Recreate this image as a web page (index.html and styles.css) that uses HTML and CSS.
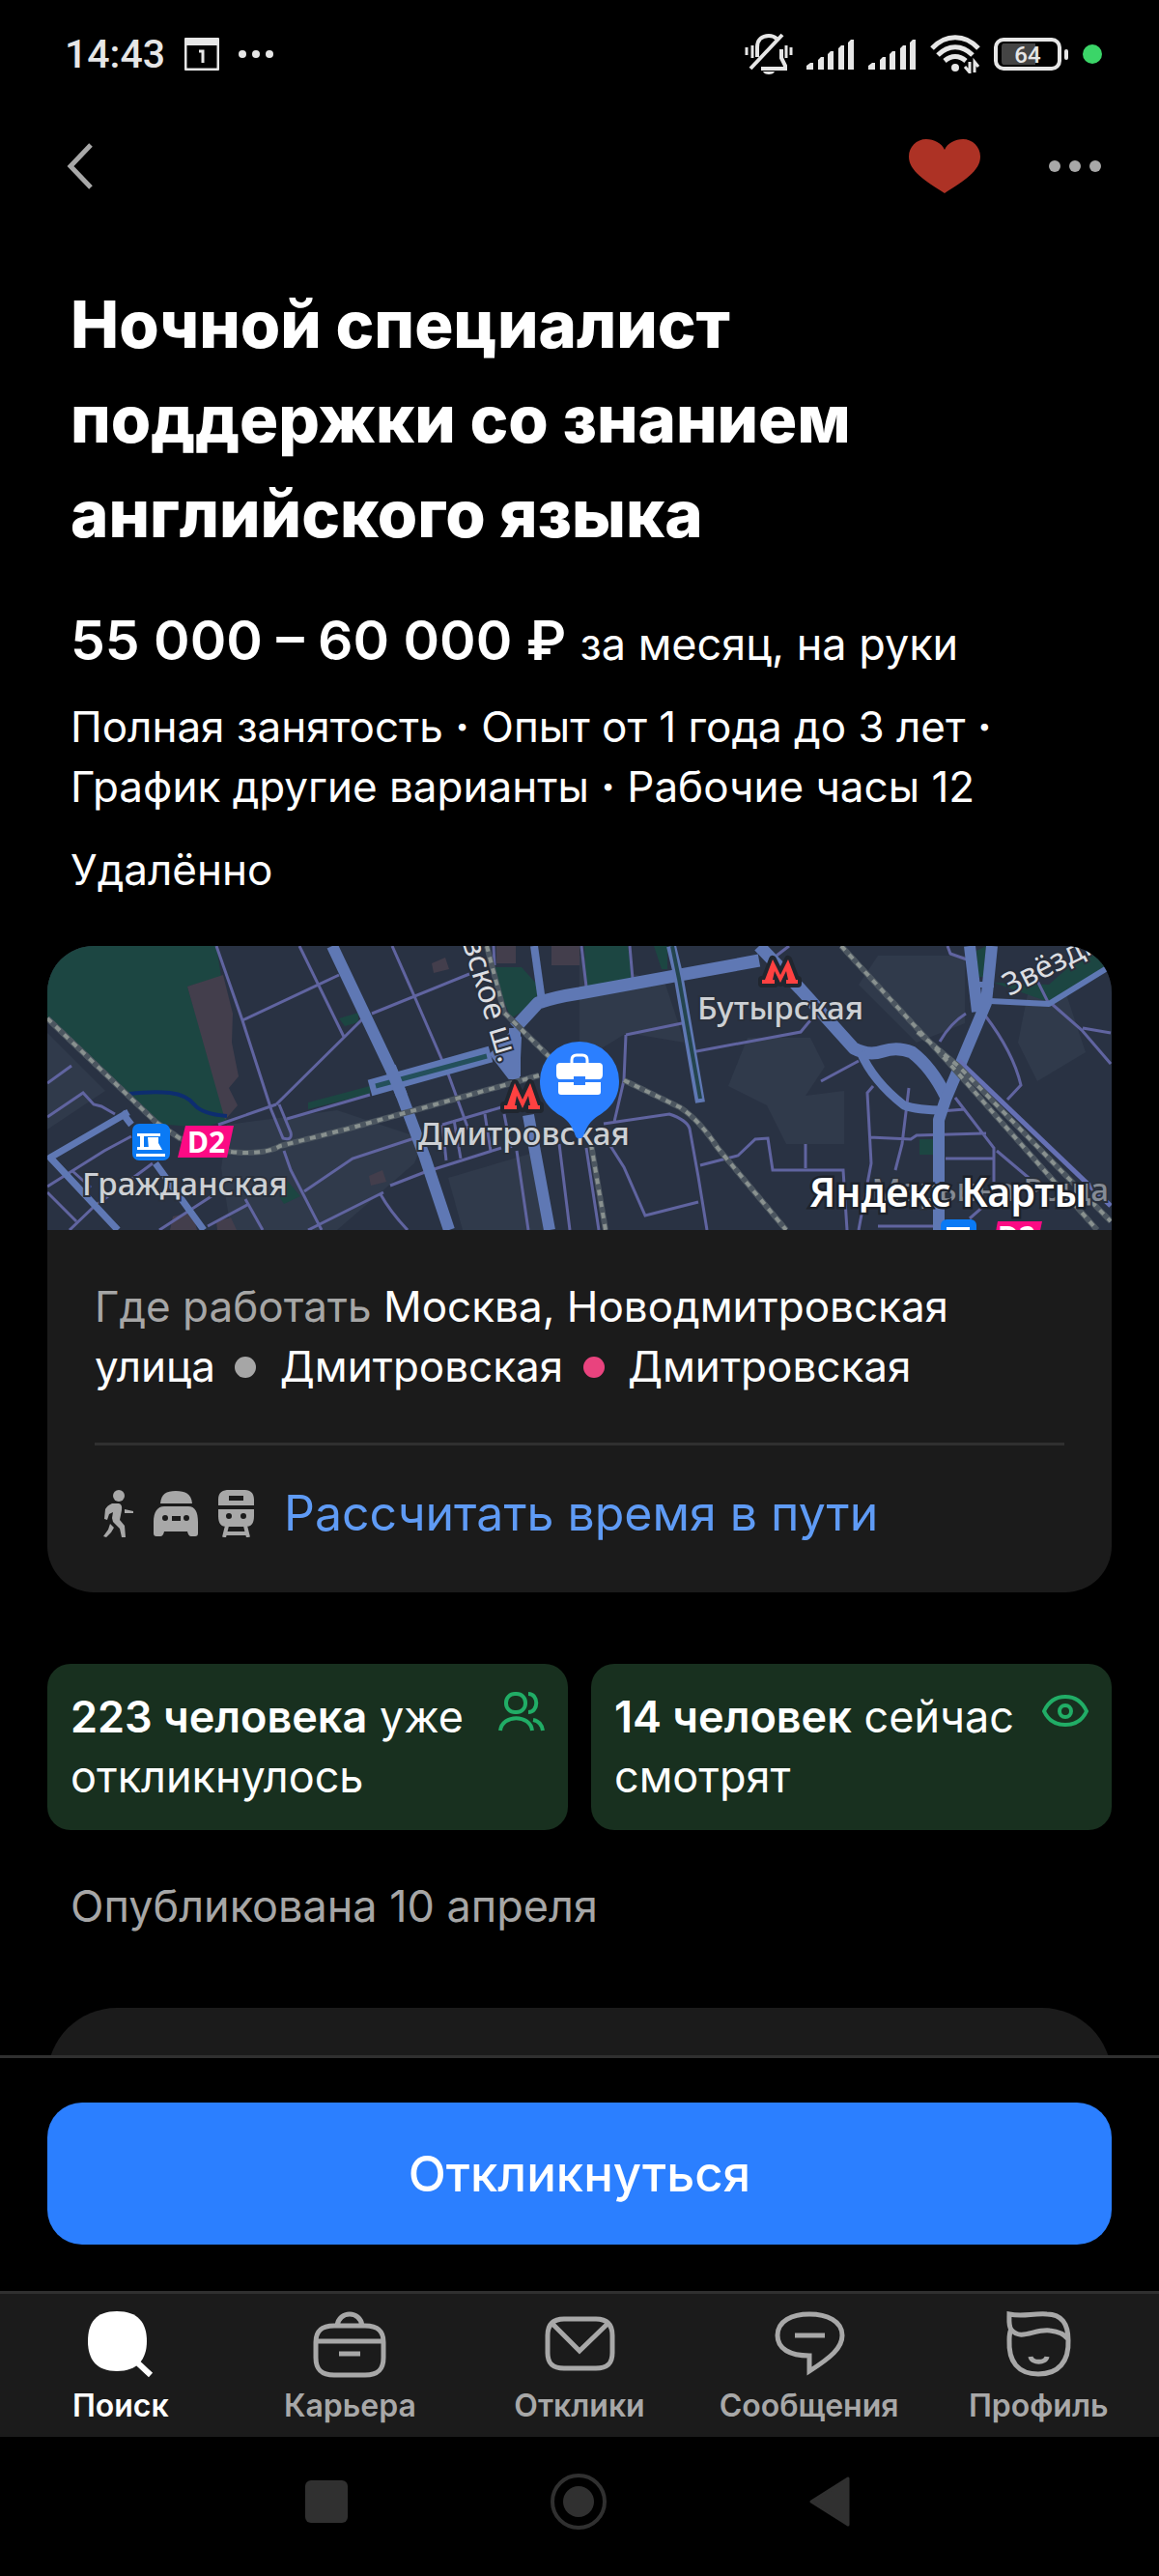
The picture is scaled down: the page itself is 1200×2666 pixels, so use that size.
FILE: index.html
```
<!DOCTYPE html>
<html lang="ru">
  <head>
    <meta charset="UTF-8" />
    <meta name="viewport" content="width=device-width, initial-scale=1.0" />
    <title>Ночной специалист поддержки со знанием английского языка</title>
    <link rel="stylesheet" href="styles.css">
  </head>
  <body>
    <div class="statusBar">
      <div class="statusLeft">
        <span class="time">14:43</span>
        <svg width="36" height="34" viewBox="0 0 36 34">
          <rect x="1" y="1" width="34" height="32" rx="2" fill="none" stroke="#e6e6e6" stroke-width="3" />
          <rect x="1" y="1" width="34" height="7" fill="#e6e6e6" />
          <path d="M15 14h4v12" fill="none" stroke="#e6e6e6" stroke-width="3" />
        </svg>
        <svg width="36" height="8" viewBox="0 0 36 8" fill="#e6e6e6">
          <circle cx="4" cy="4" r="4" />
          <circle cx="18" cy="4" r="4" />
          <circle cx="32" cy="4" r="4" />
        </svg>
      </div>
      <div class="statusRight">
        <svg width="50" height="44" viewBox="0 0 50 44" fill="none" stroke="#e6e6e6" stroke-width="4">
          <path d="M13 25V15C13 7 18 3 25 3c4 0 6 1 8 3M38 17v9l4 8v3H17" />
          <path d="M6 37L39 2" />
          <path d="M19 40h12c-1 4-11 4-12 0z" fill="#e6e6e6" stroke="none" />
          <path d="M2 15v8M8 13v13M43 13v13M48 15v8" stroke-width="3" />
        </svg>
        <svg width="50" height="34" viewBox="0 0 50 34" fill="#e6e6e6">
          <path d="M0 33v-4l4-3h3v7zM12 33V23l3-3h3v13zM22 33V17l3-3h3v19zM33 33V11l3-3h3v25zM43 33V5l3-3h3v31z" />
        </svg>
        <svg width="50" height="34" viewBox="0 0 50 34" fill="#e6e6e6">
          <path d="M0 33v-4l4-3h3v7zM12 33V23l3-3h3v13zM22 33V17l3-3h3v19zM33 33V11l3-3h3v25zM43 33V5l3-3h3v31z" />
        </svg>
        <svg width="52" height="40" viewBox="0 0 52 40" fill="none" stroke="#e6e6e6" stroke-width="5">
          <path d="M2 14C16-1 36-1 50 14M8 21c11-11 25-11 36 0M15 27c7-6 15-6 22 0" />
          <circle cx="26" cy="34" r="4" fill="#e6e6e6" stroke="none" />
          <path d="M41 28v11l-5-6M46 39V28l4 5" stroke-width="3" />
        </svg>
        <div class="battery"><span class="batteryText">64</span></div>
        <span class="cameraDot"></span>
      </div>
    </div>

    <header class="topBar">
      <button class="iconBtn" type="button" aria-label="Назад">
        <svg width="32" height="52" viewBox="0 0 32 52" fill="none" stroke="#a8a8a8" stroke-width="5">
          <path d="M30 4L9 26l21 22" />
        </svg>
      </button>
      <div class="topActions">
        <button class="iconBtn" type="button" aria-label="В избранное">
          <svg width="74" height="56" viewBox="0 0 74 56" fill="#ad3225">
            <path d="M37 11C34 4 26 0 18 0 8 0 0 8 0 18c0 15 17 25 37 38 20-13 37-23 37-38C74 8 66 0 56 0 48 0 40 4 37 11z" />
          </svg>
        </button>
        <button class="iconBtn" type="button" aria-label="Ещё">
          <svg width="56" height="14" viewBox="0 0 56 14" fill="#a8a8a8">
            <circle cx="7" cy="7" r="6" />
            <circle cx="28" cy="7" r="6" />
            <circle cx="49" cy="7" r="6" />
          </svg>
        </button>
      </div>
    </header>

    <main class="vacancy">
      <section class="summary">
        <h1>Ночной специалист поддержки со знанием английского языка</h1>
        <p class="salary">55 000 – 60 000 ₽ <span>за месяц, на руки</span></p>
        <p class="terms">Полная занятость <b>·</b> Опыт от 1 года до 3 лет <b>·</b> График другие варианты <b>·</b> Рабочие часы 12</p>
        <p class="remote">Удалённо</p>
      </section>

      <section class="place">
        <svg class="map" viewBox="0 0 1102 294" preserveAspectRatio="xMidYMid slice">
          <rect width="1102" height="294" fill="#293243" />
          <!-- blocks -->
          <g fill="#303a4b">
            <path d="M186 185L300 170 390 200 380 225 300 294H190L180 230zM415 240L500 215 515 294H430zM551 10L640 40 660 100 600 90 551 120zM740 95h50l15 30-20 30 40-5v55h-60l-20-40-40-20 20-50zM1015 50h40l20 60-50 30-20-40zM0 90l60 60-60 40zM860 10h90v70l-50 20-60-60z" />
          </g>
          <!-- parks -->
          <g fill="#1c4642">
            <path d="M0 0H175L180 32 145 42 186 180 163 188 112 184 0 76z" />
            <path d="M462 22h29l18 20-4 17-25 16-12-30zM270 162l64-17v8l-64 16zM245 239l17 20-17 8-4-6zM556 0h45l5 34-48 8zM628 0h14v24h-6zM302 75l20-6v10l-14 4z" />
            <path d="M980 38l57 20 65-40V0h-20l-45 40zM962 5l10-5-3 32h-5zM903 200h14v16h-14z" />
          </g>
          <g fill="#433e4c">
            <path d="M145 42l37-12 10 40-1 30 7 35-10 12 9 18-13 15zM398 18l14-6 4 12-16 4zM465 0h20v18h-20zM522 0h29v20h-29zM333 238l14-6 4 12-16 4zM130 280l20-5 5 19h-28zM175 285l15-4 6 13h-20z" />
          </g>
          <path d="M85 153Q110 150 127 152T152 164T186 176" fill="none" stroke="#0d2d70" stroke-width="4" />
          <!-- streets -->
          <g fill="none" stroke="#6064a0" stroke-width="3">
            <path d="M175 0L202 77 232 170 244 199Q254 202 252 193L240 164M202 77L302 30M261 0L307 94M237 164L327 75M357 0L380 52 416 135 436 190M336 70L437 29M177 185L237 164M248 179L334 154M380 199L316 220 266 254M245 212L252 232 284 294M270 294L348 255M355 248L391 234 470 209M345 257Q355 275 373 294" />
            <path d="M0 142L25 124M0 177L37 152 48 164 56 166 70 174M0 249L59 212 87 197M23 294L48 270M0 255L30 285M48 270L109 225M25 232L45 250M116 294L170 259M166 290L209 267M205 262L223 294" />
            <path d="M409 185L470 167M409 185L413 222M421 180L428 220M453 174L459 212M473 174L480 209M486 212L498 294M530 205L541 294M462 0L463 20" />
            <path d="M603 0L606 34M553 0L558 42M599 92L662 79M599 92L597 139 587 182M667 110L780 89 790 77M801 140L840 119M576 184L644 174Q662 180 665 189L674 239 683 294M676 227L715 217 733 200 746 199 751 232 824 232 828 294M785 205L785 230M583 207L597 229 619 279 674 265M558 209L571 294" />
            <path d="M855 145L849 152 853 225 840 294M892 147L885 205 878 232M851 198L894 200 900 196 972 194M930 220H980M940 157L980 209V260L955 282M983 212L1022 245M1040 60L1071 87 1101 122M1072 85L1101 90M971 72Q1000 110 1008 144L994 159M951 70Q935 80 924 99M755 10L768 0M932 0L935 8 952 14M1022 30L1037 60M925 171L950 169M860 290H925" />
          </g>
          <!-- main roads -->
          <g fill="none" stroke="#5f78b4" stroke-linejoin="round">
            <path d="M295 0L361 139 391 219 416 294" stroke-width="12" />
            <path d="M334 147L459 112" stroke-width="17" />
            <path d="M340 145L455 114" stroke="#24505b" stroke-width="5" />
            <path d="M355 125L367 155" stroke-width="12" />
            <path d="M484 85V135M498 175L520 294" stroke-width="12" />
            <path d="M459 112l25-27 6 10-2 42-10 0z" fill="#5f78b4" stroke-width="2" />
            <path d="M484 85L508 59Q525 53 551 49L737 15" stroke-width="13" />
            <path d="M504 0L512 57" stroke-width="8" />
            <path d="M77 172L87 185M84 172L3 219 73 294M112 225L162 294" stroke-width="7" />
            <path d="M646 0L653 29 676 162" stroke-width="10" />
            <path d="M647 0L654 34 676 158" stroke="#24454e" stroke-width="4" />
            <path d="M737 0L780 45 835 106Q850 114 865 109T895 110Q915 125 930 155" stroke-width="13" />
            <path d="M842 110Q855 140 887 165Q900 170 930 170" stroke-width="9" />
            <path d="M955 0L963 68M978 0L972 59 930 159 923 180V294" stroke-width="12" />
            <path d="M960 40H980M976 57L1037 60 1102 20" stroke-width="6" />
            <path d="M944 119L1101 269" stroke="#6570b4" stroke-width="5" />
          </g>
          <!-- railways -->
          <g fill="none" stroke="#4c5660" stroke-width="6">
            <path d="M0 75L112 182 137 199Q180 214 205 214T241 207L312 189 420 159 509 134" />
            <path d="M597 139L655 167Q675 180 694 209L765 294" />
            <path d="M822 0L937 125 1087 294M901 89L944 125 1101 285M563 205L578 294M455 0L473 69 520 115" />
          </g>
          <g fill="none" stroke="#89918f" stroke-width="4" stroke-dasharray="6 6">
            <path d="M0 75L112 182 137 199Q180 214 205 214T241 207L312 189 420 159 509 134" />
            <path d="M597 139L655 167Q675 180 694 209L765 294" />
            <path d="M822 0L937 125 1087 294M901 89L944 125 1101 285M563 205L578 294M455 0L473 69 520 115" />
          </g>
          <!-- metro signs -->
          <g fill="#ff4141" stroke="#20262f" stroke-width="8" paint-order="stroke" stroke-linejoin="round">
            <path d="M740 39v-4h3l8-21 8 16 8-16 8 21h2v4h-12v-4h2l-2-9-6 12-6-12-2 9h2v4z" />
            <path d="M473 169v-4h3l8-23 8 17 8-17 8 23h2v4h-12v-4h2l-2-10-6 13-6-13-2 10h2v4z" />
          </g>
          <!-- train stations -->
          <rect x="88" y="184" width="39" height="38" rx="7" fill="#0a7af5" />
          <path d="M93 194h24v3H93zM96 197h4v11h-4zM93 208h12v3H93zM104 198h11v6l4 7h-14zM92 215h30v3H92z" fill="#fff" />
          <path d="M143 186h50l-7 33h-51z" fill="#fc0a84" />
          <text x="145" y="214" class="lineCode">D2</text>
          <rect x="925" y="283" width="37" height="30" rx="6" fill="#0a7af5" />
          <path d="M931 291h24v4h-24z" fill="#fff" />
          <path d="M984 285h46l-7 33h-45z" fill="#fc0a84" />
          <text x="984" y="312" class="lineCode">D2</text>
          <!-- names -->
          <text x="36" y="258" class="station">Гражданская</text>
          <text x="384" y="206" class="station">Дмитровская</text>
          <text x="673" y="76" class="station">Бутырская</text>
          <text x="1099" y="264" class="station faded" text-anchor="end">Марьина Роща</text>
          <text class="street" text-anchor="end" transform="translate(468 122) rotate(73)">Дмитровское ш.</text>
          <text class="street" transform="translate(996 52) rotate(-27)">Звёздный</text>
          <text x="789" y="270" class="mapBrand">Яндекс Карты</text>
          <!-- job pin -->
          <path d="M551 99a41 41 0 0 1 41 41c0 18-10 29-22 36-8 5-12 12-15 21-1 3-7 3-8 0-3-9-7-16-15-21-12-7-22-18-22-36a41 41 0 0 1 41-41z" fill="#2b7fff" />
          <g fill="#fff">
            <path d="M527 125q0-4 4-4h40q4 0 4 4v8q0 5-4 5h-14v-3h-12v3h-14q-4 0-4-5z" />
            <path d="M529 141h16v3h12v-3h16v10q0 3-3 3h-38q-3 0-3-3z" />
            <path d="M543 121v-3q0-5 5-5h6q5 0 5 5v3" fill="none" stroke="#fff" stroke-width="3" />
          </g>
        </svg>
        <div class="placeBody">
          <p class="address"><span class="muted">Где работать</span> Москва, Новодмитровская улица <i class="metroDot"></i> Дмитровская <i class="metroDot pink"></i> Дмитровская</p>
          <a class="route" href="#route">
            <span class="routeIcons">
              <svg width="48" height="50" viewBox="0 0 48 50" fill="#a8a8a8">
                <circle cx="25" cy="7" r="6" />
                <path d="M18 15H25Q29 16 28 22L26 32 31 38 32 50H28L26 41 19 34 18 30 19 24 15 26 13 32 10 31 11 21Q13 17 18 15zM16 36L20 40 17 45 12 50 9 49 14 42zM31 21L40 23V25L31 25z" />
              </svg>
              <svg width="48" height="50" viewBox="0 0 48 50" fill="#a8a8a8">
                <path d="M8 15C9 5 14 2 24 2s16 3 17 13z" />
                <path fill-rule="evenodd" d="M12 18h25c7 0 10 6 10 16v12q0 3-3 3h-4q-3 0-4-5H12q-1 5-4 5H4q-3 0-3-3V34C1 24 5 18 12 18zM13 27a3 3 0 1 0 0 6 3 3 0 1 0 0-6zM35 27a3 3 0 1 0 0 6 3 3 0 1 0 0-6zM20 28v5h9v-5z" />
              </svg>
              <svg width="48" height="50" viewBox="0 0 48 50" fill="#a8a8a8">
                <path fill-rule="evenodd" d="M8 17V11C8 3 13 1 19 1h15c6 0 11 2 11 10v6zM19 7v5h15V7zM8 21h37v7c0 8-3 11-9 11H17c-6 0-9-3-9-11zM19 25a3 3 0 1 0 0 6 3 3 0 1 0 0-6zM34 25a3 3 0 1 0 0 6 3 3 0 1 0 0-6z" />
                <path d="M17 38L14 50M36 38L39 50M16 46h21" stroke="#a8a8a8" stroke-width="4" />
              </svg>
            </span>
            Рассчитать время в пути
          </a>
        </div>
      </section>

      <section class="stats">
        <div class="stat">
          <p><strong>223 человека</strong> уже откликнулось</p>
          <svg width="48" height="48" viewBox="0 0 48 48" fill="none" stroke="#21ad66" stroke-width="4">
            <rect x="8" y="7" width="20" height="19" rx="9" />
            <path d="M2 45c2-17 31-17 33 0M31 7c11 0 11 19 0 19M36 34c6 1 9 5 10 11" />
          </svg>
        </div>
        <div class="stat">
          <p><strong>14 человек</strong> сейчас смотрят</p>
          <svg width="48" height="48" viewBox="0 0 48 48" fill="none" stroke="#21ad66" stroke-width="4">
            <path d="M2 25C7 14 15 10 24 10s17 4 22 15c-5 11-13 14-22 14S7 36 2 25z" />
            <circle cx="24" cy="25" r="6" />
          </svg>
        </div>
      </section>
      <p class="published">Опубликована 10 апреля</p>
      <section class="nextCard"></section>
    </main>

    <div class="apply">
      <button class="applyBtn" type="button">Откликнуться</button>
    </div>

    <nav class="tabs">
      <a class="tab active" href="#search">
        <svg width="76" height="72" viewBox="0 0 76 72">
          <path d="M34 2C56 2 65 14 65 33S55 64 34 64 4 52 4 33 12 2 34 2z" fill="#fff" />
          <path d="M54 54L69 68" stroke="#fff" stroke-width="6" />
        </svg>
        Поиск
      </a>
      <a class="tab" href="#career">
        <svg width="76" height="72" viewBox="0 0 76 72" fill="none" stroke="#a8a8a8" stroke-width="5">
          <path d="M22 17H54C68 17 73 23 73 34V50C73 63 67 68 54 68H22C9 68 3 63 3 50V34C3 23 8 17 22 17zM4 33H72M27 46H49M25 17C27 1 49 1 51 17" />
        </svg>
        Карьера
      </a>
      <a class="tab" href="#responses">
        <svg width="76" height="72" viewBox="0 0 76 72" fill="none" stroke="#a8a8a8" stroke-width="5">
          <path d="M22 10H55C67 10 72 16 72 27V45C72 56 67 61 55 61H22C10 61 5 56 5 45V27C5 16 10 10 22 10zM9 14L38 43 68 14" />
        </svg>
        Отклики
      </a>
      <a class="tab" href="#messages">
        <svg width="76" height="72" viewBox="0 0 76 72" fill="none" stroke="#a8a8a8" stroke-width="5">
          <path d="M38 48V64C60 50 72 40 72 27 72 12 56 5 38 5S5 12 5 27C5 41 18 48 38 48zM23 27H54" />
        </svg>
        Сообщения
      </a>
      <a class="tab" href="#profile">
        <svg width="76" height="72" viewBox="0 0 76 72" fill="none" stroke="#a8a8a8" stroke-width="5">
          <path d="M8 5C22 8 32 4 47 5 62 5 69 15 69 32 70 54 59 67 38 67S7 54 8 32C8 27 8 24 10 21 7 17 8 10 8 5zM10 21C20 33 34 20 50 22 60 23 66 27 69 31M30 49C31 56 46 56 47 49" />
        </svg>
        Профиль
      </a>
    </nav>

    <div class="systemNav">
      <button class="iconBtn" type="button" aria-label="Недавние">
        <svg width="60" height="60" viewBox="0 0 60 60"><rect x="6" y="8" width="44" height="44" rx="6" fill="#303030" /></svg>
      </button>
      <button class="iconBtn" type="button" aria-label="Домой">
        <svg width="60" height="60" viewBox="0 0 60 60"><circle cx="29" cy="30" r="27" fill="none" stroke="#303030" stroke-width="4" /><circle cx="29" cy="30" r="16" fill="#303030" /></svg>
      </button>
      <button class="iconBtn" type="button" aria-label="Назад в системе">
        <svg width="60" height="60" viewBox="0 0 60 60"><path d="M10 30L48 6V54z" fill="#303030" stroke="#303030" stroke-width="3" stroke-linejoin="round" /></svg>
      </button>
    </div>
  </body>
</html>
```
FILE: styles.css
```
* {
  box-sizing: border-box;
}
body {
  margin: 0;
  height: 100vh;
  display: flex;
  flex-direction: column;
  overflow: hidden;
  background-color: #000;
  color: #fff;
  font-family: Inter, "Liberation Sans", sans-serif;
  font-size: 44px;
  line-height: 62px;
}
h1,
p {
  margin: 0;
}
svg {
  display: block;
  flex: none;
}
.statusBar {
  display: flex;
  justify-content: space-between;
  align-items: center;
  height: 112px;
  padding: 0 59px 0 67px;
  font-family: Roboto, sans-serif;
  color: #e6e6e6;
}
.statusLeft {
  display: flex;
  align-items: center;
  gap: 20px;
}
.statusRight {
  display: flex;
  align-items: center;
  gap: 14px;
}
.time {
  font-size: 41px;
  font-weight: 500;
}
.battery {
  position: relative;
  width: 70px;
  height: 34px;
  margin-right: 8px;
  border: 4px solid #e6e6e6;
  border-radius: 10px;
  background: linear-gradient(90deg, #444 64%, transparent 64%) content-box;
  padding: 2px 4px;
}
.battery::after {
  content: "";
  position: absolute;
  top: 8px;
  right: -11px;
  width: 4px;
  height: 11px;
  border-radius: 2px;
  background-color: #e6e6e6;
}
.batteryText {
  display: block;
  font-size: 24px;
  font-weight: 500;
  line-height: 24px;
  text-align: center;
}
.cameraDot {
  width: 20px;
  height: 20px;
  border-radius: 50%;
  background-color: #3bd568;
}
.iconBtn {
  padding: 0;
  border: 0;
  background: none;
}
.topBar {
  display: flex;
  justify-content: space-between;
  align-items: center;
  height: 120px;
  padding: 0 59px 0 64px;
}
.topActions {
  display: flex;
  align-items: center;
  gap: 70px;
}
.vacancy {
  flex: 1;
  min-height: 0;
  overflow: hidden;
  padding: 55px 49px 0;
}
.summary {
  padding: 0 24px;
}
h1 {
  max-width: 960px;
  font-size: 67px;
  font-weight: 800;
  line-height: 98px;
}
.salary {
  margin-top: 48px;
  font-size: 57px;
  font-weight: 600;
  line-height: 68px;
}
.salary span {
  font-size: 45px;
  font-weight: 400;
  line-height: 45px;
}
.terms {
  margin-top: 24px;
}
.remote {
  margin-top: 24px;
}
.place {
  margin-top: 48px;
  border-radius: 48px;
  background-color: #1b1b1b;
  overflow: hidden;
}
.map {
  width: 100%;
  height: 294px;
}
.map text {
  font-family: "Noto Sans", sans-serif;
  paint-order: stroke;
  stroke: #29303c;
  stroke-width: 4px;
}
.map .station {
  font-size: 33px;
  font-weight: 500;
  fill: #cdd0d4;
}
.map .faded {
  fill: #858b94;
}
.map .street {
  font-size: 32px;
  fill: #dcdee2;
}
.map .lineCode {
  font-size: 30px;
  font-weight: 700;
  fill: #fff;
  stroke: none;
}
.map .mapBrand {
  font-size: 41px;
  font-weight: 600;
  fill: #fff;
  stroke: #1d222b;
  stroke-width: 5px;
}
.placeBody {
  padding: 48px 49px;
}
.muted {
  color: #a6a6a6;
}
.metroDot {
  display: inline-block;
  width: 22px;
  height: 22px;
  margin: 0 12px 0 8px;
  border-radius: 50%;
  background-color: #a6a6a6;
  vertical-align: 4px;
}
.metroDot.pink {
  background-color: #e9437e;
}
.route {
  display: flex;
  align-items: center;
  gap: 28px;
  margin-top: 48px;
  padding-top: 36px;
  border-top: 3px solid #303030;
  color: #5f9bf5;
  font-size: 50px;
  line-height: 68px;
  text-decoration: none;
}
.routeIcons {
  display: flex;
  gap: 12px;
}
.stats {
  display: grid;
  grid-template-columns: 1fr 1fr;
  gap: 24px;
  margin-top: 74px;
  font-size: 45px;
}
.stat {
  display: flex;
  justify-content: space-between;
  padding: 24px;
  border-radius: 24px;
  background-color: #18301f;
}
.stat strong {
  font-weight: 600;
}
.published {
  margin-top: 48px;
  padding: 0 24px;
  color: #a6a6a6;
  font-size: 45px;
}
.nextCard {
  height: 400px;
  margin-top: 74px;
  border-radius: 72px;
  background-color: #1b1b1b;
}
.apply {
  padding: 46px 49px 48px;
  border-top: 3px solid #303030;
}
.applyBtn {
  width: 100%;
  height: 147px;
  border: 0;
  border-radius: 36px;
  background-color: #2b7fff;
  color: #fff;
  font: inherit;
  font-size: 51px;
  font-weight: 500;
}
.tabs {
  display: grid;
  grid-template-columns: repeat(5, 1fr);
  padding: 16px 6px 12px;
  border-top: 3px solid #303030;
  background-color: #1b1b1b;
}
.tab {
  display: flex;
  flex-direction: column;
  align-items: center;
  gap: 8px;
  color: #a8a8a8;
  font-size: 32px;
  font-weight: 600;
  line-height: 40px;
  text-decoration: none;
}
.tab.active {
  color: #fff;
}
.systemNav {
  display: flex;
  justify-content: center;
  align-items: center;
  gap: 200px;
  height: 144px;
  padding-bottom: 10px;
}
```
